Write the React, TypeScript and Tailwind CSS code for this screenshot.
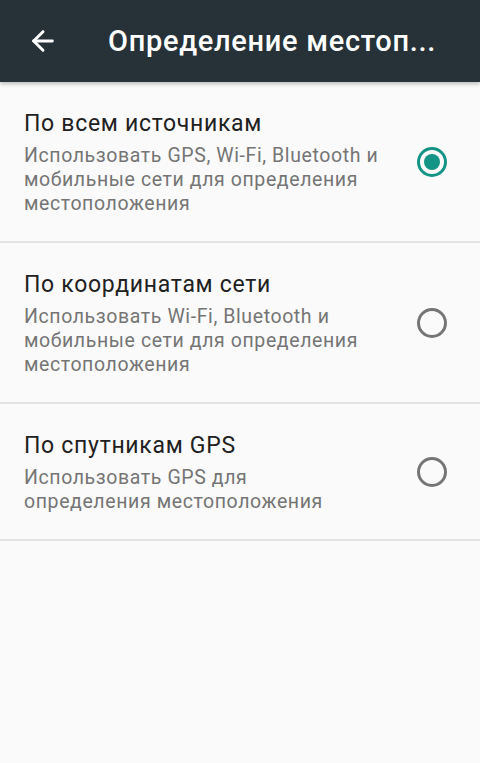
import { ArrowLeft } from 'lucide-react';

const options = [
  {
    title: 'По всем источникам',
    lines: ['Использовать GPS, Wi-Fi, Bluetooth и', 'мобильные сети для определения', 'местоположения'],
    checked: true,
  },
  {
    title: 'По координатам сети',
    lines: ['Использовать Wi-Fi, Bluetooth и', 'мобильные сети для определения', 'местоположения'],
    checked: false,
  },
  {
    title: 'По спутникам GPS',
    lines: ['Использовать GPS для', 'определения местоположения'],
    checked: false,
  },
];

const Radio = ({ checked }: { checked: boolean }) =>
  checked ? (
    <div className="w-[30px] h-[30px] rounded-full border-[3px] border-[#149484] flex items-center justify-center">
      <div className="w-[16px] h-[16px] rounded-full bg-[#149484]" />
    </div>
  ) : (
    <div className="w-[30px] h-[30px] rounded-full border-[3px] border-[#757575]" />
  );

export default function App() {
  return (
    <div className="w-[480px] h-[763px] bg-[#fafafa] font-['Roboto',sans-serif] overflow-hidden">
      {/* Toolbar */}
      <div className="relative z-10 h-[82px] bg-[#263238] flex items-center shadow-[0_2px_4px_rgba(0,0,0,0.25)]">
        <div className="w-[108px] pl-[27px] flex items-center">
          <ArrowLeft size={32} strokeWidth={2.2} className="text-white" />
        </div>
        <h1 className="whitespace-nowrap text-white text-[29px] tracking-[0.7px] font-medium leading-[34px]">
          Определение местоп...
        </h1>
      </div>

      {/* Options */}
      <div>
        {options.map((opt, i) => (
          <div key={i} className="flex items-center border-b-2 border-[#e2e2e2] pl-6 pr-[33px]">
            <div className="flex-1 pt-[28px] pb-[25px]">
              <div className="text-[23px] tracking-[0.7px] leading-[28px] text-[#212121]">{opt.title}</div>
              <div className="mt-[6px] text-[19.5px] tracking-[0.6px] leading-[24px] text-[#757575]">
                {opt.lines.map((l, j) => (
                  <div key={j} className="whitespace-nowrap">{l}</div>
                ))}
              </div>
            </div>
            <Radio checked={opt.checked} />
          </div>
        ))}
      </div>
    </div>
  );
}
